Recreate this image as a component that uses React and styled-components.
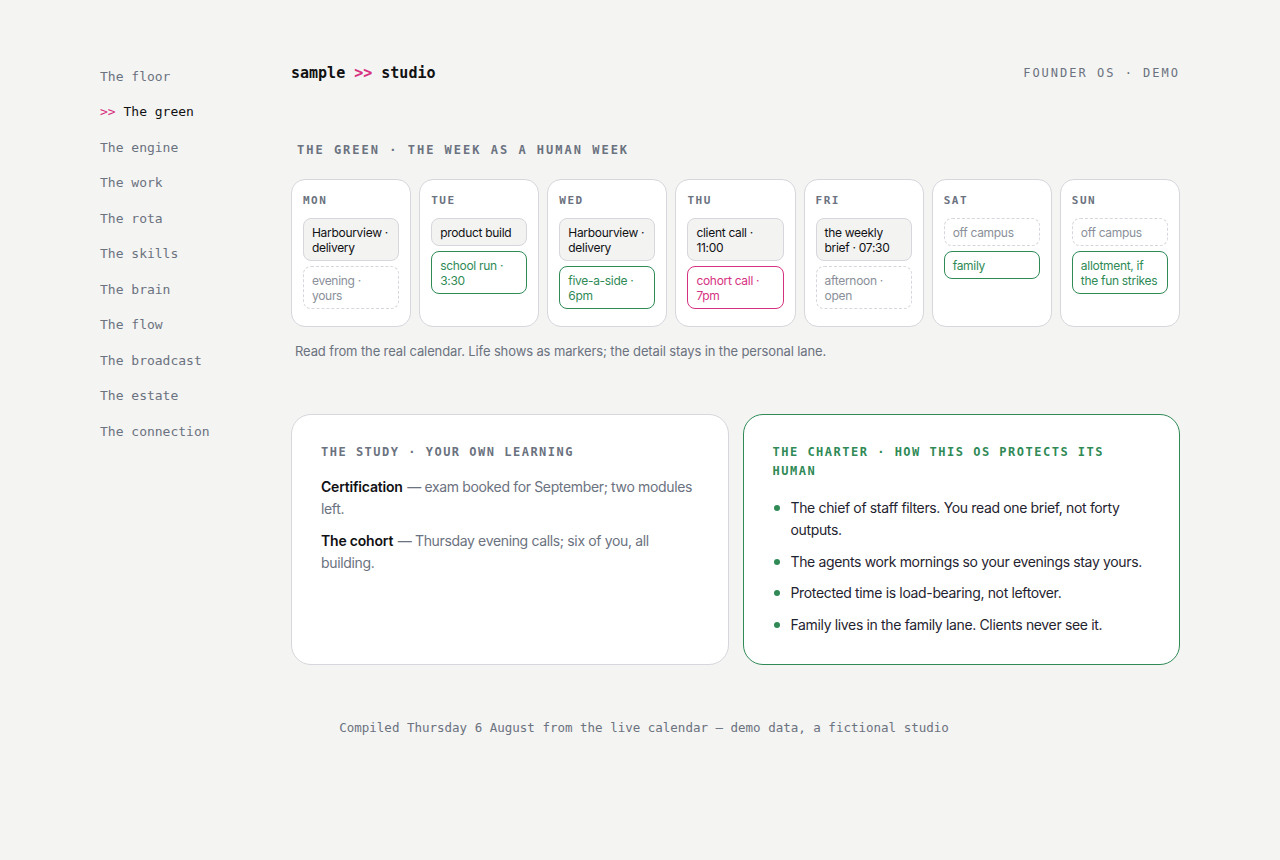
import React from 'react'
import styled, { createGlobalStyle } from 'styled-components'

const Color = {
  page: '#f4f4f2',
  card: '#ffffff',
  line: '#d6d6dc',
  ink: '#111114',
  body: '#1f2430',
  muted: '#6b7280',
  faint: '#8a8f99',
  green: '#2f8a56',
  pink: '#d6317f',
  chip: '#f3f3f2',
}

const mono = `"DejaVu Sans Mono", "Liberation Mono", monospace`
const sans = `Inter, "Noto Sans", "Liberation Sans", sans-serif`

const nav = [
  'The floor', 'The green', 'The engine', 'The work', 'The rota', 'The skills',
  'The brain', 'The flow', 'The broadcast', 'The estate', 'The connection',
]

const week = [
  { day: 'MON', items: [{ kind: 'work', text: 'Harbourview · delivery' }, { kind: 'open', text: 'evening · yours' }] },
  { day: 'TUE', items: [{ kind: 'work', text: 'product build' }, { kind: 'life', text: 'school run · 3:30' }] },
  { day: 'WED', items: [{ kind: 'work', text: 'Harbourview · delivery' }, { kind: 'life', text: 'five-a-side · 6pm' }] },
  { day: 'THU', items: [{ kind: 'work', text: 'client call · 11:00' }, { kind: 'cohort', text: 'cohort call · 7pm' }] },
  { day: 'FRI', items: [{ kind: 'work', text: 'the weekly brief · 07:30' }, { kind: 'open', text: 'afternoon · open' }] },
  { day: 'SAT', items: [{ kind: 'open', text: 'off campus' }, { kind: 'life', text: 'family' }] },
  { day: 'SUN', items: [{ kind: 'open', text: 'off campus' }, { kind: 'life', text: 'allotment, if the fun strikes' }] },
]

const charter = [
  'The chief of staff filters. You read one brief, not forty outputs.',
  'The agents work mornings so your evenings stay yours.',
  'Protected time is load-bearing, not leftover.',
  'Family lives in the family lane. Clients never see it.',
]

const GlobalStyle = createGlobalStyle`
  *, *::before, *::after {
    box-sizing: border-box;
  }
  html, body {
    margin: 0;
    background: ${Color.page};
  }
  body {
    font-family: ${sans};
    -webkit-font-smoothing: antialiased;
  }
`

const Page = styled.div`
  display: grid;
  grid-template-columns: 191px 1fr;
  padding: 62px 100px 120px 100px;
  min-height: 860px;
`

const Nav = styled.nav`
  display: flex;
  flex-direction: column;
  gap: 15.5px;
  padding-top: 4.5px;
`

const NavItem = styled.div`
  font-family: ${mono};
  font-size: 13px;
  line-height: 20px;
  color: ${p => (p.$active ? Color.ink : Color.muted)};
  white-space: nowrap;
`

const Arrow = styled.span`
  color: ${Color.pink};
`

const Main = styled.main`
  display: flex;
  flex-direction: column;
`

const Header = styled.header`
  display: flex;
  align-items: center;
  justify-content: space-between;
  height: 20px;
  margin-top: 1px;
`

const Brand = styled.div`
  font-family: ${mono};
  font-weight: 700;
  font-size: 15px;
  color: ${Color.ink};
`

const Tag = styled.div`
  font-family: ${mono};
  font-size: 12px;
  letter-spacing: 2px;
  color: ${Color.muted};
`

const SectionTitle = styled.h2`
  margin: 59px 0 21px 6px;
  font-family: ${mono};
  font-weight: 700;
  font-size: 12px;
  line-height: 16px;
  letter-spacing: 2px;
  color: ${Color.muted};
`

const Week = styled.div`
  display: grid;
  grid-template-columns: repeat(7, 1fr);
  gap: 8px;
`

const DayCard = styled.div`
  background: ${Color.card};
  border: 1px solid ${Color.line};
  border-radius: 14px;
  padding: 14px 11px 17px;
  display: flex;
  flex-direction: column;
  gap: 5px;
`

const DayLabel = styled.div`
  font-family: ${mono};
  font-weight: 700;
  font-size: 11px;
  line-height: 14px;
  letter-spacing: 1.5px;
  color: ${Color.muted};
  margin-bottom: 5px;
`

const eventLook = {
  work: { bg: Color.chip, border: `1px solid ${Color.line}`, color: Color.ink },
  open: { bg: Color.card, border: `1px dashed ${Color.line}`, color: Color.faint },
  life: { bg: Color.card, border: `1px solid ${Color.green}`, color: Color.green },
  cohort: { bg: Color.card, border: `1px solid ${Color.pink}`, color: Color.pink },
}

const Event = styled.div`
  font-size: 12px;
  line-height: 15px;
  letter-spacing: -0.3px;
  padding: 5.5px 8px;
  border-radius: 8px;
  background: ${p => eventLook[p.$kind].bg};
  border: ${p => eventLook[p.$kind].border};
  color: ${p => eventLook[p.$kind].color};
`

const Caption = styled.p`
  margin: 14px 0 0 4px;
  font-size: 13px;
  line-height: 20px;
  letter-spacing: -0.12px;
  color: ${Color.muted};
`

const Panels = styled.div`
  display: grid;
  grid-template-columns: 1fr 1fr;
  gap: 14px;
  margin-top: 53px;
`

const Panel = styled.section`
  min-height: 251px;
  background: ${Color.card};
  border: 1px solid ${p => (p.$accent ? Color.green : Color.line)};
  border-radius: 20px;
  padding: 28px 29px;
`

const PanelTitle = styled.h3`
  margin: 0 0 14px;
  font-family: ${mono};
  font-weight: 700;
  font-size: 12px;
  line-height: 19px;
  letter-spacing: 1.5px;
  color: ${p => (p.$accent ? Color.green : Color.muted)};
`

const Note = styled.p`
  margin: 0 0 10px;
  font-size: 14px;
  line-height: 22px;
  letter-spacing: -0.35px;
  color: ${Color.muted};
`

const Lead = styled.b`
  color: ${Color.ink};
  font-weight: 600;
  letter-spacing: -0.2px;
  margin-right: 1px;
`

const List = styled.ul`
  list-style: none;
  margin: 16px 0 0;
  padding: 0;
  display: flex;
  flex-direction: column;
  gap: 9.5px;
`

const Point = styled.li`
  position: relative;
  padding-left: 18px;
  font-size: 14px;
  line-height: 22px;
  letter-spacing: -0.35px;
  color: ${Color.body};

  &::before {
    content: '';
    position: absolute;
    left: 1px;
    top: 8px;
    width: 6px;
    height: 6px;
    border-radius: 50%;
    background: ${Color.green};
  }
`

const Footer = styled.footer`
  grid-column: 1 / -1;
  margin-top: 51px;
  padding-left: 8px;
  text-align: center;
  font-family: ${mono};
  font-size: 12.5px;
  line-height: 16px;
  color: ${Color.muted};
`

export default function App() {
  return (
    <>
      <GlobalStyle />
      <Page>
        <Nav>
          {nav.map(name => (
            <NavItem key={name} $active={name === 'The green'}>
              {name === 'The green' && <Arrow>&gt;&gt; </Arrow>}
              {name}
            </NavItem>
          ))}
        </Nav>

        <Main>
          <Header>
            <Brand>sample <Arrow>&gt;&gt;</Arrow> studio</Brand>
            <Tag>FOUNDER OS · DEMO</Tag>
          </Header>

          <SectionTitle>THE GREEN · THE WEEK AS A HUMAN WEEK</SectionTitle>
          <Week>
            {week.map(d => (
              <DayCard key={d.day}>
                <DayLabel>{d.day}</DayLabel>
                {d.items.map(it => (
                  <Event key={it.text} $kind={it.kind}>{it.text}</Event>
                ))}
              </DayCard>
            ))}
          </Week>
          <Caption>
            Read from the real calendar. Life shows as markers; the detail stays in the personal lane.
          </Caption>

          <Panels>
            <Panel>
              <PanelTitle>THE STUDY · YOUR OWN LEARNING</PanelTitle>
              <Note><Lead>Certification</Lead> — exam booked for September; two modules left.</Note>
              <Note><Lead>The cohort</Lead> — Thursday evening calls; six of you, all building.</Note>
            </Panel>
            <Panel $accent>
              <PanelTitle $accent>THE CHARTER · HOW THIS OS PROTECTS ITS HUMAN</PanelTitle>
              <List>
                {charter.map(line => <Point key={line}>{line}</Point>)}
              </List>
            </Panel>
          </Panels>
        </Main>

        <Footer>
          Compiled Thursday 6 August from the live calendar — demo data, a fictional studio
        </Footer>
      </Page>
    </>
  )
}
